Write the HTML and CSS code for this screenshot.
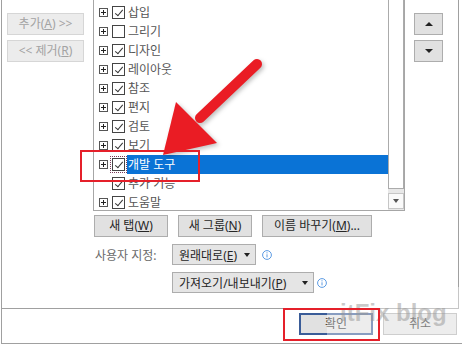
FILE: index.html
```html
<!DOCTYPE html>
<html lang="ko">
<head>
  <meta charset="UTF-8" />
  <title>리본 사용자 지정</title>
  <link rel="stylesheet" href="styles.css">
</head>
<body>
  <div class="shot">
    <div class="dialog">
      <div class="panel">
        <div class="col-left">
          <button class="btn btn-off">추가(<u>A</u>) &gt;&gt;</button>
          <button class="btn btn-off">&lt;&lt; 제거(<u>R</u>)</button>
        </div>

        <div class="col-mid">
          <div class="listbox">
            <ul class="tree">
              <li class="node"><span class="exp"></span><span class="chk on"></span><span class="lbl">홈</span></li>
              <li class="node"><span class="exp"></span><span class="chk on"></span><span class="lbl">삽입</span></li>
              <li class="node"><span class="exp"></span><span class="chk"></span><span class="lbl">그리기</span></li>
              <li class="node"><span class="exp"></span><span class="chk on"></span><span class="lbl">디자인</span></li>
              <li class="node"><span class="exp"></span><span class="chk on"></span><span class="lbl">레이아웃</span></li>
              <li class="node"><span class="exp"></span><span class="chk on"></span><span class="lbl">참조</span></li>
              <li class="node"><span class="exp"></span><span class="chk on"></span><span class="lbl">편지</span></li>
              <li class="node"><span class="exp"></span><span class="chk on"></span><span class="lbl">검토</span></li>
              <li class="node"><span class="exp"></span><span class="chk on"></span><span class="lbl">보기</span></li>
              <li class="node selected"><span class="exp"></span><span class="chk on focus"></span><span class="lbl">개발 도구</span></li>
              <li class="node"><span class="exp none"></span><span class="chk on"></span><span class="lbl">추가 기능</span></li>
              <li class="node"><span class="exp"></span><span class="chk on"></span><span class="lbl">도움말</span></li>
            </ul>
            <div class="vscroll">
              <div class="thumb"></div>
              <div class="track"></div>
              <div class="sbtn"><span class="tri-down small"></span></div>
            </div>
          </div>

          <div class="btn-row">
            <button class="btn w74">새 탭(<u>W</u>)</button>
            <button class="btn w74">새 그룹(<u>N</u>)</button>
            <button class="btn w110">이름 바꾸기(<u>M</u>)...</button>
          </div>

          <div class="form-row">
            <span class="label">사용자 지정:</span>
            <div class="select w84"><span>원래대로(<u>E</u>)</span><span class="tri-down"></span></div>
            <svg class="info gap7" viewBox="0 0 10 10"><circle cx="5" cy="5" r="4.4"/><line x1="5" y1="4.3" x2="5" y2="7.4"/><circle class="dot" cx="5" cy="2.8" r="0.6"/></svg>
          </div>

          <div class="form-row">
            <span class="label"></span>
            <div class="select w142"><span>가져오기/내보내기(<u>P</u>)</span><span class="tri-down"></span></div>
            <svg class="info gap3" viewBox="0 0 10 10"><circle cx="5" cy="5" r="4.4"/><line x1="5" y1="4.3" x2="5" y2="7.4"/><circle class="dot" cx="5" cy="2.8" r="0.6"/></svg>
          </div>
        </div>

        <div class="col-right">
          <button class="btn btn-sq"><span class="tri-up"></span></button>
          <button class="btn btn-sq"><span class="tri-down"></span></button>
        </div>
      </div>

      <div class="footer">
        <button class="btn w74 btn-default">확인</button>
        <button class="btn w74">취소</button>
      </div>
    </div>

    <!-- annotations on top of the screenshot -->
    <div class="watermark">itFix blog</div>
    <svg class="arrow" width="463" height="345" viewBox="0 0 463 345">
      <line x1="257" y1="64" x2="200" y2="118" />
      <polygon points="163,155 176,102 217,143" />
    </svg>
    <div class="mark mark-row"></div>
    <div class="mark mark-ok"></div>
  </div>
</body>
</html>
```

FILE: styles.css
```css
body {
  margin: 0;
  background: #fff;
  font-family: "Noto Sans", "Noto Sans CJK KR", sans-serif;
  font-size: 12px;
  color: #333;
}

.shot {
  position: relative;
  width: 463px;
  height: 345px;
  overflow: hidden;
}

.dialog {
  margin-left: 1px;
  width: 460px;
  height: 343px;
  border-left: 1px solid #a0a0a0;
  border-bottom: 1px solid #a0a0a0;
  background: #fff;
}

.panel {
  display: flex;
  width: 456px;
  height: 308px;
  border-right: 1px solid #a0a0a0;
  border-bottom: 1px solid #a0a0a0;
}

/* buttons */
.btn {
  font: inherit;
  color: #262626;
  height: 22px;
  padding: 0;
  margin: 0;
  border: 1px solid #adadad;
  background: #e1e1e1;
  display: flex;
  align-items: center;
  justify-content: center;
  line-height: 1;
}

.btn-off {
  width: 77px;
  color: #a3a3a3;
  background: #ececec;
  border-color: #d6d6d6;
}

.btn-default {
  border: 2px solid #3a5c98;
}

.w74 { width: 74px; }
.w110 { width: 110px; }

.btn-sq {
  width: 29px;
}

.col-left {
  width: 91px;
  padding: 13px 0 0 5px;
  box-sizing: border-box;
  display: flex;
  flex-direction: column;
  gap: 5px;
}

.col-mid {
  width: 312px;
  display: flex;
  flex-direction: column;
}

.col-right {
  width: 53px;
  padding: 13px 0 0 9px;
  box-sizing: border-box;
  display: flex;
  flex-direction: column;
  gap: 5px;
}

/* tree list */
.listbox {
  display: flex;
  height: 210px;
  border: 1px solid #a6a6a6;
  border-top: none;
}

.tree {
  flex: 1;
  list-style: none;
  margin: 0;
  padding: 0;
  overflow: hidden;
}

.node {
  display: flex;
  align-items: center;
  height: 19px;
  padding-left: 5px;
  color: #555;
}

.node:first-child {
  margin-top: -16px;
}

.exp {
  position: relative;
  width: 9px;
  height: 9px;
  box-sizing: border-box;
  border: 1px solid #555;
  margin-right: 4px;
}

.exp::before,
.exp::after {
  content: '';
  position: absolute;
  background: #222;
}

.exp::before { left: 1px; top: 3px; width: 5px; height: 1px; }
.exp::after { left: 3px; top: 1px; width: 1px; height: 5px; }

.exp.none {
  border-color: transparent;
}

.exp.none::before,
.exp.none::after {
  display: none;
}

.chk {
  position: relative;
  width: 13px;
  height: 13px;
  box-sizing: border-box;
  border: 1px solid #444;
  background: #fff;
}

.chk.on::after {
  content: '';
  position: absolute;
  left: 3.5px;
  top: 0.5px;
  width: 3px;
  height: 7px;
  border: solid #333;
  border-width: 0 1.3px 1.3px 0;
  transform: rotate(40deg);
}

.chk.focus {
  outline: 1px dotted #7a3b5a;
  outline-offset: 1px;
}

.lbl {
  flex: 1;
  margin-left: 2px;
  padding-left: 1px;
  height: 19px;
  line-height: 19px;
  white-space: nowrap;
}

.selected .lbl {
  background: #0a73d6;
  color: #fff;
}

/* scrollbar */
.vscroll {
  width: 16px;
  display: flex;
  flex-direction: column;
  background: #e8e8e8;
}

.thumb {
  height: 188px;
  border: 1px solid #ababab;
  border-top: none;
  background: #fff;
}

.track {
  height: 4px;
}

.sbtn {
  height: 16px;
  box-sizing: border-box;
  border: 1px solid #c6c6c6;
  background: #fafafa;
  display: flex;
  align-items: center;
  justify-content: center;
}

.tri-up,
.tri-down {
  width: 0;
  height: 0;
  border-left: 4px solid transparent;
  border-right: 4px solid transparent;
}

.tri-up { border-bottom: 4px solid #222; }
.tri-down { border-top: 4px solid #222; }

.tri-down.small {
  border-left-width: 3.5px;
  border-right-width: 3.5px;
  border-top: 4px solid #555;
}

/* rows under the list */
.btn-row {
  display: flex;
  gap: 10px;
  margin: 4px 0 0 1px;
}

.form-row {
  display: flex;
  align-items: center;
  margin-top: 7px;
}

.label {
  width: 77px;
  margin-left: 2px;
  color: #6a6a6a;
}

.select {
  height: 21px;
  box-sizing: border-box;
  border: 1px solid #adadad;
  background: #e5e5e5;
  color: #262626;
  display: flex;
  align-items: center;
  justify-content: space-between;
  padding: 0 5px 0 6px;
}

.w84 { width: 84px; }
.w142 { width: 142px; }

.select .tri-down {
  border-left-width: 3.5px;
  border-right-width: 3.5px;
}

.info {
  width: 10px;
  height: 10px;
}

.info circle,
.info line {
  fill: none;
  stroke: #4a8fe0;
  stroke-width: 0.9;
}

.info .dot {
  fill: #4a8fe0;
  stroke: none;
}

.gap7 { margin-left: 6px; }
.gap3 { margin-left: 3px; }

/* footer */
.footer {
  height: 34px;
  display: flex;
  justify-content: flex-end;
  gap: 10px;
  padding: 4px 5px 0 0;
  box-sizing: border-box;
}

.footer .btn {
  height: 22px;
}

/* overlays */
.watermark {
  position: absolute;
  left: 327px;
  top: 287px;
  width: 136px;
  height: 50px;
  padding: 14px 0 0 13px;
  box-sizing: border-box;
  background: rgba(255, 255, 255, 0.4);
  font-family: "Liberation Sans", Arial, sans-serif;
  font-weight: bold;
  font-size: 24px;
  line-height: 1;
  color: rgba(150, 150, 150, 0.5);
  white-space: nowrap;
}

.arrow {
  position: absolute;
  left: 0;
  top: 0;
  filter: drop-shadow(2px 2px 2px rgba(0, 0, 0, 0.25));
}

.arrow line {
  stroke: #ea1c24;
  stroke-width: 10;
  stroke-linecap: round;
}

.arrow polygon {
  fill: #ea1c24;
}

.mark {
  position: absolute;
  border: 2px solid #e5202a;
  box-sizing: border-box;
}

.mark-row {
  left: 80px;
  top: 150px;
  width: 120px;
  height: 32px;
}

.mark-ok {
  left: 283px;
  top: 308px;
  width: 97px;
  height: 33px;
}
```
